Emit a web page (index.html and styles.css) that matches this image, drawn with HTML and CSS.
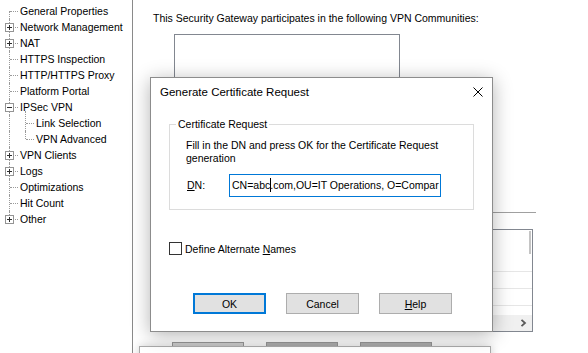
FILE: index.html
```html
<!DOCTYPE html>
<html>
<head>
<meta charset="utf-8">
<title>Generate Certificate Request</title>
<link rel="stylesheet" href="styles.css">
</head>
<body>
<div class="screen">
  <div class="tree">
    <div class="row"><span class="conn first"></span><span class="label">General Properties</span></div>
    <div class="row"><span class="conn"><span class="box plus"></span></span><span class="label">Network Management</span></div>
    <div class="row"><span class="conn"><span class="box plus"></span></span><span class="label">NAT</span></div>
    <div class="row"><span class="conn"></span><span class="label">HTTPS Inspection</span></div>
    <div class="row"><span class="conn"></span><span class="label">HTTP/HTTPS Proxy</span></div>
    <div class="row"><span class="conn"></span><span class="label">Platform Portal</span></div>
    <div class="row"><span class="conn"><span class="box"></span></span><span class="label">IPSec VPN</span></div>
    <div class="row"><span class="conn pass"></span><span class="conn up"></span><span class="label">Link Selection</span></div>
    <div class="row"><span class="conn pass"></span><span class="conn last"></span><span class="label">VPN Advanced</span></div>
    <div class="row"><span class="conn"><span class="box plus"></span></span><span class="label">VPN Clients</span></div>
    <div class="row"><span class="conn"><span class="box plus"></span></span><span class="label">Logs</span></div>
    <div class="row"><span class="conn"></span><span class="label">Optimizations</span></div>
    <div class="row"><span class="conn"></span><span class="label">Hit Count</span></div>
    <div class="row"><span class="conn last"><span class="box plus"></span></span><span class="label">Other</span></div>
  </div>

  <div class="main">
    <div class="intro">This Security Gateway participates in the following VPN Communities:</div>
    <div class="listbox"></div>
    <div class="sep"></div>
    <div class="list2">
      <div class="l2-top"><span class="vthumb"></span></div>
      <div class="l2-row"></div>
      <div class="l2-row"></div>
      <div class="l2-gap"></div>
      <div class="hscroll">
        <svg class="chev" width="7" height="8" viewBox="0 0 7 8"><path d="M1.5 0.8 L5 4 L1.5 7.2" fill="none" stroke="#5a5a5a" stroke-width="1.8"/></svg>
      </div>
    </div>
    <div class="bg-buttons">
      <span class="bg-btn light"></span>
      <span class="bg-btn"></span>
      <span class="bg-btn"></span>
    </div>
  </div>

  <div class="dialog">
    <div class="titlebar">
      <span class="title">Generate Certificate Request</span>
      <svg class="close" width="10" height="10" viewBox="0 0 10 10"><path d="M0.5 0.5 L9.5 9.5 M9.5 0.5 L0.5 9.5" stroke="#000" stroke-width="1" fill="none"/></svg>
    </div>
    <div class="dbody">
      <div class="group">
        <div class="group-title">Certificate Request</div>
        <div class="desc">Fill in the DN and press OK for the Certificate Request<br>generation</div>
        <div class="dn-row">
          <span class="dn-label"><u>D</u>N:</span>
          <div class="input"><span>CN=abc</span><span class="caret"></span><span>.com,OU=IT Operations, O=Compar</span></div>
        </div>
      </div>
      <div class="check-row"><span class="checkbox"></span><span class="check-label">Define Alternate <u>N</u>ames</span></div>
      <div class="buttons">
        <button class="btn default">OK</button>
        <button class="btn">Cancel</button>
        <button class="btn"><u>H</u>elp</button>
      </div>
    </div>
  </div>

  <div class="lower-window"></div>
</div>
</body>
</html>
```

FILE: styles.css
```css
html, body {
  margin: 0;
  padding: 0;
  background: #fff;
}

.screen {
  position: relative;
  width: 588px;
  height: 353px;
  overflow: hidden;
  display: flex;
  background: #fff;
  font-family: "Liberation Sans", Arial, sans-serif;
  font-size: 10.5px;
  color: #000;
}

/* ---------- tree ---------- */
.tree {
  flex: none;
  width: 132px;
  border-right: 1px solid #8a8a8a;
  padding-top: 3px;
}

.row {
  display: flex;
  height: 16px;
  line-height: 16px;
  white-space: nowrap;
}

.label {
  margin-left: 1px;
}

.conn {
  position: relative;
  flex: none;
  width: 19px;
  height: 16px;
}

.conn::before {
  content: "";
  position: absolute;
  left: 9px;
  top: 0;
  bottom: 0;
  border-left: 1px dotted #9a9a9a;
}

.conn::after {
  content: "";
  position: absolute;
  left: 10px;
  top: 8px;
  width: 8px;
  border-top: 1px dotted #9a9a9a;
}

.conn.pass {
  width: 16px;
}

.conn.pass::after {
  display: none;
}

.conn.first::before {
  top: 8px;
}

.conn.last::before {
  bottom: 8px;
}

.conn.up::before {
  top: -4px;
}

.box {
  position: absolute;
  z-index: 1;
  left: 5px;
  top: 4px;
  width: 7px;
  height: 7px;
  border: 1px solid #949494;
  background: #fff;
}

.box::before {
  content: "";
  position: absolute;
  left: 1px;
  top: 3px;
  width: 5px;
  height: 1px;
  background: #2e2e2e;
}

.box.plus::after {
  content: "";
  position: absolute;
  left: 3px;
  top: 1px;
  width: 1px;
  height: 5px;
  background: #2e2e2e;
}

/* ---------- main (background) ---------- */
.main {
  flex: 1;
  padding: 12px 0 0 20px;
}

.intro {
  line-height: 13px;
  white-space: nowrap;
}

.listbox {
  margin: 9px 0 0 21px;
  width: 226px;
  height: 150px;
  box-sizing: border-box;
  border: 1px solid #828790;
}

.sep {
  margin: 28px 0 0 21px;
  width: 362px;
  height: 1px;
  background: #a0a0a0;
}

.list2 {
  margin: 16px 0 0 21px;
  width: 359px;
  height: 103px;
  box-sizing: border-box;
  border: 1px solid #828790;
  display: flex;
  flex-direction: column;
}

.l2-top {
  height: 41px;
  border-bottom: 1px solid #e6e6e6;
  display: flex;
  justify-content: flex-end;
}

.vthumb {
  width: 2px;
  height: 23px;
  margin-top: 1px;
  margin-right: 1px;
  background: #c4c4c4;
}

.l2-row {
  height: 16px;
  border-bottom: 1px solid #e6e6e6;
}

.l2-gap {
  height: 9px;
}

.hscroll {
  height: 16px;
  background: #f0f0f0;
  display: flex;
  align-items: center;
  justify-content: flex-end;
  padding-right: 5px;
}

.chev {
  display: block;
}

.bg-buttons {
  display: flex;
  gap: 22px;
  margin: 10px 0 0 19px;
}

.bg-btn {
  width: 72px;
  height: 23px;
  box-sizing: border-box;
  border: 1px solid #9a9a9a;
  background: #b4b4b4;
}

.bg-btn.light {
  background: #d4d4d4;
}

/* ---------- dialog ---------- */
.dialog {
  position: absolute;
  left: 150px;
  top: 77px;
  width: 343px;
  height: 255px;
  box-sizing: border-box;
  border: 1px solid #8c8c8c;
  background: #fff;
  box-shadow: 0 3px 18px rgba(0, 0, 0, 0.3);
  z-index: 2;
}

.titlebar {
  height: 27px;
  display: flex;
  align-items: center;
  justify-content: space-between;
  padding: 0 9px 0 9px;
}

.title {
  font-size: 11.5px;
}

.close {
  display: block;
  margin-top: 1px;
}

.dbody {
  padding: 0 0 0 18px;
}

.group {
  margin-top: 19px;
  width: 305px;
  box-sizing: border-box;
  border: 1px solid #dcdcdc;
  padding: 0 16px 12px 16px;
}

.group-title {
  width: fit-content;
  margin: -7px 0 0 -10px;
  padding: 0 2px;
  line-height: 13px;
  background: #fff;
}

.desc {
  margin-top: 8px;
  line-height: 13px;
  white-space: nowrap;
}

.dn-row {
  display: flex;
  align-items: center;
  margin-top: 9px;
}

.dn-label {
  flex: none;
  width: 42px;
  padding-left: 1px;
  line-height: 13px;
}

.input {
  flex: none;
  width: 212px;
  height: 23px;
  box-sizing: border-box;
  border: 1px solid #0078d7;
  padding-left: 2px;
  line-height: 21px;
  white-space: nowrap;
  overflow: hidden;
}

.caret {
  display: inline-block;
  width: 1px;
  height: 14px;
  margin-right: -1px;
  background: #000;
  vertical-align: -3px;
}

.check-row {
  display: flex;
  align-items: center;
  margin-top: 31px;
  line-height: 13px;
}

.checkbox {
  flex: none;
  width: 13px;
  height: 13px;
  box-sizing: border-box;
  border: 1px solid #333;
  background: #fff;
}

.check-label {
  margin-left: 3px;
  padding-top: 2px;
}

.buttons {
  display: flex;
  gap: 20px;
  margin-top: 37px;
  padding-left: 24px;
}

.btn {
  width: 73px;
  height: 21px;
  box-sizing: border-box;
  border: 1px solid #adadad;
  background: #e1e1e1;
  font-family: "Liberation Sans", Arial, sans-serif;
  font-size: 10.5px;
  color: #000;
  padding: 0;
  margin: 0;
}

.btn.default {
  border: 2px solid #0078d7;
}

/* ---------- lower window ---------- */
.lower-window {
  position: absolute;
  left: 139px;
  top: 346px;
  width: 352px;
  height: 30px;
  box-sizing: border-box;
  border: 1px solid #a9a9a9;
  background: #fff;
  box-shadow: 0 0 10px rgba(0, 0, 0, 0.2);
  z-index: 1;
}
```
